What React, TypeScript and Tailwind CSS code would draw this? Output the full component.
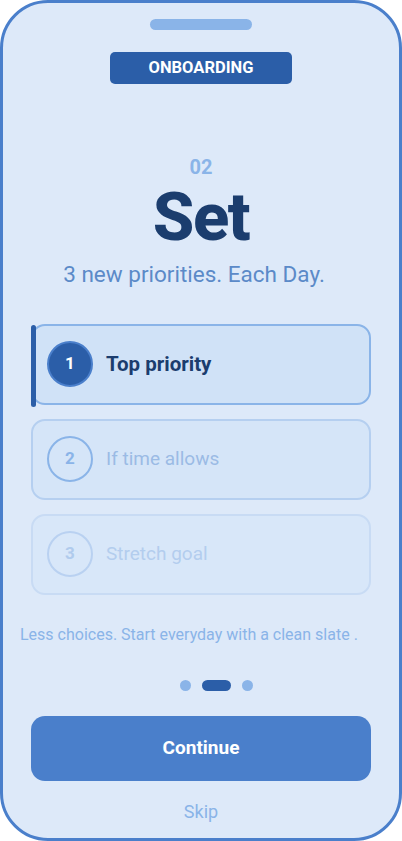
import React from 'react';

type Item = { n: number; label: string; state: 'active' | 'next' | 'later' };

const items: Item[] = [
    { n: 1, label: 'Top priority', state: 'active' },
    { n: 2, label: 'If time allows', state: 'next' },
    { n: 3, label: 'Stretch goal', state: 'later' },
];

function PriorityCard({ item }: { item: Item }) {
    if (item.state === 'active') {
        return (
            <div className="relative flex h-[81px] items-center gap-[13px] rounded-[14px] border-2 border-[#8ab4e8] bg-[#d0e2f7] pl-[14px]">
                <span className="absolute -left-[2px] top-[-1px] h-[82px] w-[5px] rounded-full bg-[#2b5ea8]" />
                <div className="flex h-[46px] w-[46px] items-center justify-center rounded-full border-2 border-[#4a7fcb] bg-[#2b5ea8] text-[17px] font-bold text-white">
                    {item.n}
                </div>
                <span className="text-[20.5px] font-bold text-[#1b3d6e]">{item.label}</span>
            </div>
        );
    }
    const next = item.state === 'next';
    return (
        <div
            className={
                next
                    ? 'flex h-[81px] items-center gap-[13px] rounded-[14px] border-2 border-[#b5cff0] bg-[#d5e5f8] pl-[14px]'
                    : 'flex h-[81px] items-center gap-[13px] rounded-[14px] border-2 border-[#c8dbf4] bg-[#d8e7f9] pl-[14px]'
            }
        >
            <div
                className={
                    next
                        ? 'flex h-[46px] w-[46px] items-center justify-center rounded-full border-2 border-[#8ab4e8] text-[17px] font-bold text-[#8ab4e8]'
                        : 'flex h-[46px] w-[46px] items-center justify-center rounded-full border-2 border-[#b9d1f1] text-[17px] font-bold text-[#b0cbed]'
                }
            >
                {item.n}
            </div>
            <span className={next ? 'text-[19px] text-[#9bbbe5]' : 'text-[19px] text-[#b3cdee]'}>{item.label}</span>
        </div>
    );
}

export default function App() {
    return (
        <div className="h-[841px] w-[402px] bg-white" style={{ fontFamily: 'Roboto, "Noto Sans", sans-serif' }}>
            <div className="flex h-full w-full flex-col items-center rounded-[48px] border-[3px] border-[#4a7fcb] bg-[#dde9f9]">
                {/* Notch */}
                <div className="mt-[16px] h-[11px] w-[102px] rounded-full bg-[#8ab4e8]" />

                {/* Badge */}
                <div className="mt-[22px] flex h-[32px] w-[182px] items-center justify-center rounded-[5px] bg-[#2b5ea8] text-[16.5px] font-bold text-white">
                    ONBOARDING
                </div>

                {/* Heading */}
                <p className="mt-[73px] text-[20px] font-bold leading-none text-[#8ab4e8]">02</p>
                <h1 className="mt-[7px] text-[67px] font-extrabold leading-none tracking-[-1.5px] text-[#1b3d6e]">Set</h1>
                <p className="mr-[14px] mt-[12px] text-[22.5px] leading-none text-[#5b8ac8]">3 new priorities. Each Day.</p>

                {/* Priorities */}
                <div className="mt-[38px] flex w-full flex-col gap-[14px] px-[28px]">
                    {items.map((item) => (
                        <PriorityCard key={item.n} item={item} />
                    ))}
                </div>

                <p className="mt-[28px] w-full pl-[17px] text-[16px] text-[#8ab4e8]">
                    Less choices. Start everyday with a clean slate .
                </p>

                {/* Pager */}
                <div className="ml-[30px] mt-[33px] flex items-center gap-[11px]">
                    <span className="h-[11px] w-[11px] rounded-full bg-[#8ab4e8]" />
                    <span className="h-[11px] w-[29px] rounded-full bg-[#2b5ea8]" />
                    <span className="h-[11px] w-[11px] rounded-full bg-[#8ab4e8]" />
                </div>

                {/* Actions */}
                <div className="mt-[25px] w-full px-[28px]">
                    <button className="flex h-[65px] w-full items-center justify-center rounded-[14px] bg-[#4a7fcb] text-[19px] font-bold text-white">
                        Continue
                    </button>
                </div>
                <button className="mt-[17px] text-[18px] text-[#8ab4e8]">Skip</button>
            </div>
        </div>
    );
}
